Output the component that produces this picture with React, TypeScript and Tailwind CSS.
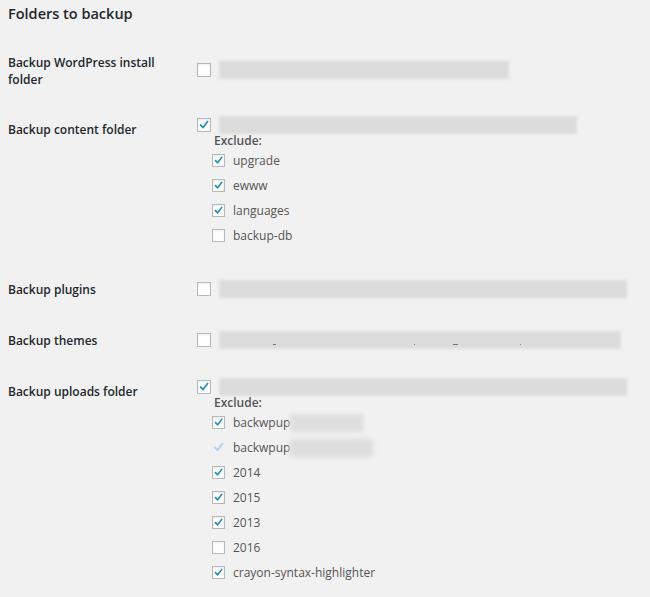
import React from "react";

const font = { fontFamily: '"Open Sans", "Liberation Sans", sans-serif' };

function Check({ light = false }: { light?: boolean }) {
  return (
    <svg viewBox="0 0 14 14" className="w-full h-full">
      <path
        d="M3.2 7.2 L5.9 9.9 L11 3.2"
        fill="none"
        stroke={light ? "#a6d2e8" : "#1e8cbe"}
        strokeWidth="2"
        strokeLinecap="square"
      />
    </svg>
  );
}

function Box({ checked, small = false, ghost = false }: { checked?: boolean; small?: boolean; ghost?: boolean }) {
  if (ghost) {
    return (
      <span className="w-[13px] h-[13px] shrink-0 block">
        <Check light />
      </span>
    );
  }
  return (
    <span
      className={`${small ? "w-[13px] h-[13px]" : "w-[14px] h-[14px]"} shrink-0 block bg-white border border-[#b4b9be] shadow-[inset_0_1px_2px_rgba(0,0,0,0.07)]`}
    >
      {checked && <Check />}
    </span>
  );
}

function Bar({ width, marks = false }: { width: number; marks?: boolean }) {
  return (
    <span className="relative block h-[18px] ml-[8px]" style={{ width }}>
      <span className="absolute inset-0 bg-[#dcdcdc] blur-[1.5px]" />
      {marks && (
        <>
          <span className="absolute left-[54px] top-[13px] w-[3px] h-[1px] bg-[#777]" />
          <span className="absolute left-[195px] top-[13px] w-[1px] h-[1px] bg-[#888]" />
          <span className="absolute left-[234px] top-[13px] w-[5px] h-[1px] bg-[#777]" />
          <span className="absolute left-[301px] top-[13px] w-[1px] h-[1px] bg-[#888]" />
        </>
      )}
    </span>
  );
}

function Item({ label, checked, ghost, blur }: { label: string; checked?: boolean; ghost?: boolean; blur?: number }) {
  return (
    <div className="flex items-center h-[25px]">
      <Box small checked={checked} ghost={ghost} />
      <span className="ml-[8px] text-[12px] text-[#555]">{label}</span>
      {blur && (
        <span className="relative block h-[18px]" style={{ width: blur }}>
          <span className="absolute inset-0 bg-[#dedede] blur-[2px]" />
        </span>
      )}
    </div>
  );
}

function Exclude({ children }: { children: React.ReactNode }) {
  return (
    <div className="ml-[15px]">
      <div className="h-[14px] leading-[14px] ml-[2px] text-[12px] font-semibold text-[#555]">Exclude:</div>
      {children}
    </div>
  );
}

function Label({ children, pt = 0 }: { children: React.ReactNode; pt?: number }) {
  return (
    <div className="w-[189px] shrink-0 text-[12px] leading-[17px] font-semibold text-[#23282d]" style={{ paddingTop: pt }}>
      {children}
    </div>
  );
}

export default function App() {
  return (
    <div className="w-[650px] h-[597px] bg-[#f1f1f1] pl-[8px] overflow-hidden" style={font}>
      <h2 className="pt-[4px] text-[14.5px] leading-[20px] font-semibold text-[#23282d]">Folders to backup</h2>

      <div className="flex items-start mt-[30px]">
        <Label>
          Backup WordPress install
          <br />
          folder
        </Label>
        <div className="flex items-center pt-[7px]">
          <Box />
          <Bar width={290} />
        </div>
      </div>

      <div className="flex items-start mt-[28px]">
        <Label pt={5}>Backup content folder</Label>
        <div>
          <div className="flex items-center">
            <Box checked />
            <Bar width={358} />
          </div>
          <Exclude>
            <Item label="upgrade" checked />
            <Item label="ewww" checked />
            <Item label="languages" checked />
            <Item label="backup-db" />
          </Exclude>
        </div>
      </div>

      <div className="flex items-start mt-[32px]">
        <Label pt={1}>Backup plugins</Label>
        <div className="flex items-center">
          <Box />
          <Bar width={408} />
        </div>
      </div>

      <div className="flex items-start mt-[33px]">
        <Label pt={1}>Backup themes</Label>
        <div className="flex items-center">
          <Box />
          <Bar width={402} marks />
        </div>
      </div>

      <div className="flex items-start mt-[29px]">
        <Label pt={5}>Backup uploads folder</Label>
        <div>
          <div className="flex items-center">
            <Box checked />
            <Bar width={408} />
          </div>
          <Exclude>
            <Item label="backwpup" checked blur={73} />
            <Item label="backwpup" ghost blur={83} />
            <Item label="2014" checked />
            <Item label="2015" checked />
            <Item label="2013" checked />
            <Item label="2016" />
            <Item label="crayon-syntax-highlighter" checked />
          </Exclude>
        </div>
      </div>
    </div>
  );
}
